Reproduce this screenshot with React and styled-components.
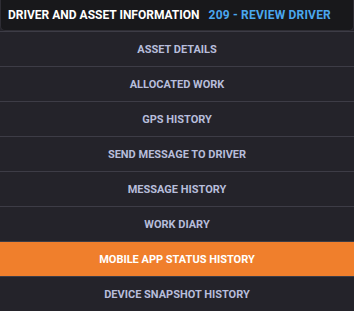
import React from 'react';
import styled, { createGlobalStyle } from 'styled-components';

const GlobalStyle = createGlobalStyle`
  html, body {
    margin: 0;
    padding: 0;
    background: #24232a;
  }
  body {
    font-family: Roboto, 'Liberation Sans', sans-serif;
  }
`;

const Panel = styled.div`
  width: 354px;
  height: 311px;
  background: #24232a;
  overflow: hidden;
`;

const Header = styled.div`
  display: flex;
  align-items: center;
  gap: 9px;
  height: 31px;
  padding: 0 7px;
  box-sizing: border-box;
  background: #18181b;
  border: 1px solid #2e2d34;
  border-top: none;
  border-radius: 0 0 5px 5px;
  font-size: 12px;
  font-weight: 700;
  white-space: nowrap;
  text-transform: uppercase;
`;

const Title = styled.span`
  color: #ffffff;
`;

const SubTitle = styled.span`
  color: #4aa7ee;
  letter-spacing: 0.2px;
`;

const Menu = styled.div`
  display: flex;
  flex-direction: column;
`;

const MenuItem = styled.div`
  display: flex;
  align-items: center;
  justify-content: center;
  height: 34px;
  border-top: 1px solid #3d3c46;
  background: ${p => (p.$active ? '#f07f2c' : '#24232a')};
  color: ${p => (p.$active ? '#ffffff' : '#b7bddb')};
  font-size: 11px;
  font-weight: 700;
  text-transform: uppercase;
`;

const items = [
  'Asset Details',
  'Allocated Work',
  'GPS History',
  'Send Message to Driver',
  'Message History',
  'Work Diary',
  'Mobile App Status History',
  'Device Snapshot History',
];

const App = () => {
  const active = 'Mobile App Status History';
  return (
    <Panel>
      <GlobalStyle />
      <Header>
        <Title>Driver and Asset Information</Title>
        <SubTitle>209 - Review Driver</SubTitle>
      </Header>
      <Menu>
        {items.map(item => (
          <MenuItem key={item} $active={item === active}>
            {item}
          </MenuItem>
        ))}
      </Menu>
    </Panel>
  );
};

export default App;
